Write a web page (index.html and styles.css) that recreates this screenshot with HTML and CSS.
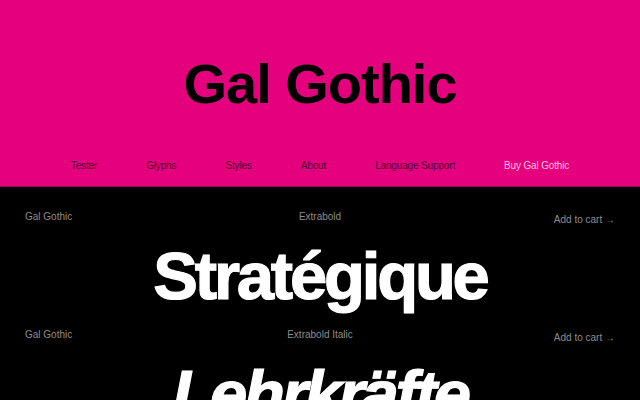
FILE: index.html
```html
<!DOCTYPE html>
<html lang="en">
<head>
<meta charset="utf-8">
<title>Gal Gothic</title>
<link rel="stylesheet" href="styles.css">
</head>
<body>
<header class="hero">
  <h1 class="title">Gal Gothic</h1>
  <nav class="nav">
    <a class="nav-link" href="#">Tester</a>
    <a class="nav-link" href="#">Glyphs</a>
    <a class="nav-link" href="#">Styles</a>
    <a class="nav-link" href="#">About</a>
    <a class="nav-link" href="#">Language Support</a>
    <a class="nav-link nav-buy" href="#">Buy Gal Gothic</a>
  </nav>
</header>
<main class="styles">
  <section class="style-row">
    <div class="meta">
      <span class="meta-family">Gal Gothic</span>
      <span class="meta-style">Extrabold</span>
      <a class="meta-cart" href="#">Add to cart →</a>
    </div>
    <div class="specimen">Stratégique</div>
  </section>
  <section class="style-row">
    <div class="meta">
      <span class="meta-family">Gal Gothic</span>
      <span class="meta-style">Extrabold Italic</span>
      <a class="meta-cart" href="#">Add to cart →</a>
    </div>
    <div class="specimen specimen-italic">Lehrkräfte</div>
  </section>
</main>
</body>
</html>
```
FILE: styles.css
```css
html, body {
  margin: 0;
  padding: 0;
  background: #000;
  overflow: hidden;
}
body {
  font-family: "Liberation Sans", Arial, sans-serif;
}
.hero {
  background: #e5007d;
  height: 187px;
  box-sizing: border-box;
  padding-top: 56px;
  border-bottom: 1px solid #9c0055;
}
.title {
  margin: 0;
  text-align: center;
  font-size: 56px;
  line-height: 56px;
  font-weight: 700;
  letter-spacing: -1px;
  color: #000;
}
.nav {
  margin-top: 48px;
  display: flex;
  justify-content: center;
  gap: 49px;
}
.nav-link {
  font-size: 10px;
  line-height: 12px;
  color: #4a0833;
  text-decoration: none;
  letter-spacing: -0.15px;
}
.nav-buy {
  color: #ffc0e6;
}
.styles {
  padding-top: 6px;
}
.style-row {
  padding-top: 18px;
}
.meta {
  display: grid;
  grid-template-columns: 1fr auto 1fr;
  padding: 0 25px;
  font-size: 10px;
  line-height: 12px;
  color: #8c8c8c;
}
.meta-family {
  justify-self: start;
}
.meta-style {
  justify-self: center;
}
.meta-cart {
  justify-self: end;
  color: #8c8c8c;
  text-decoration: none;
  position: relative;
  top: 3px;
}
.specimen {
  margin-top: 18px;
  text-align: center;
  color: #fff;
  font-size: 67px;
  line-height: 70px;
  font-weight: 900;
  letter-spacing: -3.2px;
  -webkit-text-stroke: 1.2px #fff;
}
.specimen-italic {
  font-style: italic;
}
```
